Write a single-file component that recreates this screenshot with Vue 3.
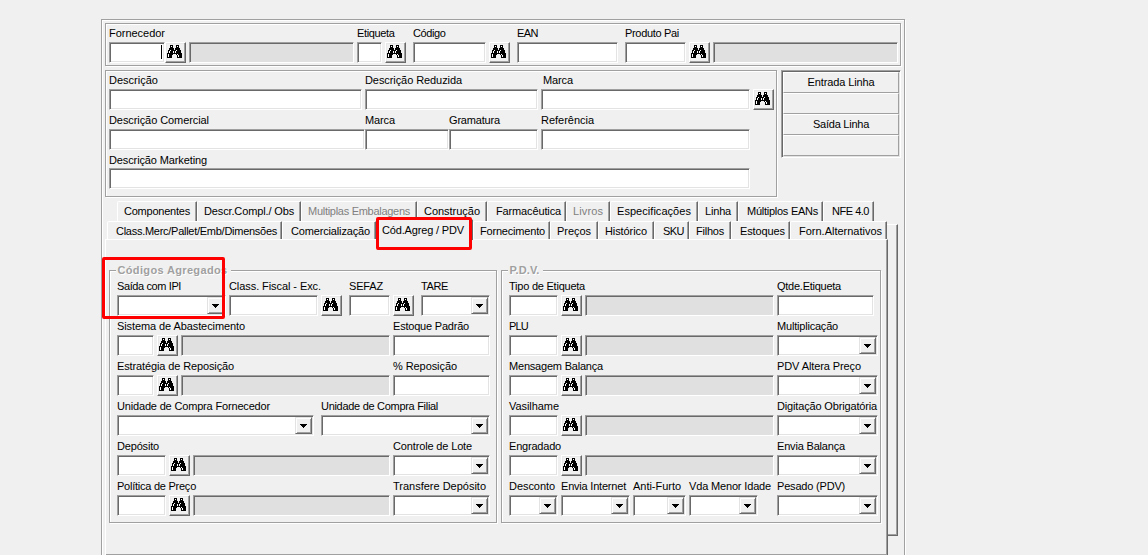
<script setup>
import { h } from 'vue'

// Spreads a caption over its nominal width
const vFit = (el, { value }) => {
  if (!value || el.dataset.fitted) return
  el.dataset.fitted = '1'
  requestAnimationFrame(() => {
    const natural = el.getBoundingClientRect().width
    el.style.letterSpacing = (value - 1 - natural) / el.textContent.length + 'px'
  })
}

// kind: t = text box, r = read-only box, c = combo box, b = search button
const f = (kind, w, label = '', lw = 0, gap = 3) => ({ kind, w, label, lw, gap })
const b = (gap = 3) => f('b', 21, '', 0, gap)

const header = [
  { ...f('t', 56, 'Fornecedor', 57, 0), caret: true }, b(0), f('r', 165),
  f('t', 25, 'Etiqueta', 38.5), b(), f('t', 73, 'Código', 33.5, 7), b(),
  f('t', 101, 'EAN', 22, 7), f('t', 61, 'Produto Pai', 55, 7), b(), f('r', 185),
]

const description = [
  [f('t', 253, 'Descrição', 50, 0), f('t', 173, 'Descrição Reduzida', 98), { ...f('t', 209, 'Marca', 31), indent: true }, b()],
  [f('t', 256, 'Descrição Comercial', 101, 0), f('t', 84, 'Marca', 31, 0), f('t', 89, 'Gramatura', 52, 0), f('t', 209, 'Referência', 54)],
  [f('t', 641, 'Descrição Marketing', 99, 0)],
]

const lines = [['Entrada Linha', 68], ['', 0], ['Saída Linha', 57], ['', 0]]

const tab = (text, w, tw, pad, disabled = false, active = false) => ({ text, w, tw, pad, disabled, active })
const upperTabs = [
  tab('Componentes', 80, 67, 6), tab('Descr.Compl./ Obs', 104, 91, 6),
  tab('Multiplas Embalagens', 116, 103, 6, true), tab('Construção', 70, 57, 6),
  tab('Farmacêutica', 79, 66, 8), tab('Livros', 44, 31, 6, true),
  tab('Especificações', 88, 75, 6), tab('Linha', 40, 27, 6),
  tab('Múltiplos EANs', 85, 72, 8), tab('NFE 4.0', 51, 38, 8),
]
const lowerTabs = [
  tab('Class.Merc/Pallet/Emb/Dimensões', 175, 162, 8), tab('Comercialização', 94, 80, 8),
  tab('Cód.Agreg / PDV', 97, 83, 5, false, true), tab('Fornecimento', 77, 66, 6),
  tab('Preços', 48, 35, 6), tab('Histórico', 56, 43, 6), tab('SKU', 35, 22, 8),
  tab('Filhos', 42, 29, 6), tab('Estoques', 59, 46, 8), tab('Forn.Alternativos', 97, 84, 8),
]
const tabRows = [upperTabs, lowerTabs]

const groups = [
  {
    name: 'Códigos Agregados', tw: 111, cls: 'codes',
    rows: [
      [f('c', 109, 'Saída com IPI', 65, 0), f('t', 89, 'Class. Fiscal - Exc.', 93), b(), f('t', 41, 'SEFAZ', 35, 7), b(), f('c', 69, 'TARE', 28, 7)],
      [f('t', 37, 'Sistema de Abastecimento', 129, 0), b(), f('r', 209), f('t', 97, 'Estoque Padrão', 77)],
      [f('t', 37, 'Estratégia de Reposição', 118, 0), b(), f('r', 209), f('t', 97, '% Reposição', 65)],
      [f('c', 197, 'Unidade de Compra Fornecedor', 154, 0), f('c', 169, 'Unidade de Compra Filial', 118, 7)],
      [f('t', 49, 'Depósito', 43, 0), b(), f('r', 197), f('c', 97, 'Controle de Lote', 80)],
      [f('t', 49, 'Política de Preço', 80, 0), b(), f('r', 197), f('c', 97, 'Transfere Depósito', 94)],
    ],
  },
  {
    name: 'P.D.V.', tw: 31, cls: 'pdv',
    rows: [
      [f('t', 49, 'Tipo de Etiqueta', 77, 0), b(), f('r', 189), f('t', 97, 'Qtde.Etiqueta', 65)],
      [f('t', 49, 'PLU', 20, 0), b(), f('r', 189), f('c', 101, 'Multiplicação', 62)],
      [f('t', 49, 'Mensagem Balança', 95, 0), b(), f('r', 189), f('c', 101, 'PDV Altera Preço', 85)],
      [f('t', 49, 'Vasilhame', 51, 0), b(), f('r', 189), f('c', 101, 'Digitação Obrigatória', 101)],
      [f('t', 49, 'Engradado', 53, 0), b(), f('r', 189), f('c', 101, 'Envia Balança', 69)],
      [f('c', 49, 'Desconto', 47, 0), f('c', 69, 'Envia Internet', 66), f('c', 53, 'Anti-Furto', 49), f('c', 69, 'Vda Menor Idade', 83), f('c', 101, 'Pesado (PDV)', 69, 19)],
    ],
  },
]

// Binoculars bitmap: X = black, o = white
const bitmap = [
  '...XXX...XXX...',
  '...XoX...XoX...',
  '...XXX...XXX...',
  '..XXXXX.XXXXX..',
  '..XXXXX.XXXXX..',
  '.XXoXXXXXoXXXX.',
  '.XoXXXoXoXXXXX.',
  '.XoXXXoXoXXXXX.',
  'XXXXXXXXXXXXXXX',
  'XoXXXX...XoXXXX',
  'XoXXX.....XoXXX',
  'XoXXX.....XoXXX',
  'XXXXX.....XXXXX',
]
const pixels = (ch) =>
  bitmap.map((row, y) => [...row].map((c, x) => (c === ch ? `M${x} ${y}h1v1h-1z` : '')).join('')).join('')
const black = pixels('X')
const white = pixels('o')
const Binoculars = () =>
  h('svg', { width: 15, height: 13, viewBox: '0 0 15 13', 'shape-rendering': 'crispEdges' }, [
    h('path', { d: black, fill: '#000' }),
    h('path', { d: white, fill: '#fff' }),
  ])

const Cell = ({ item }) =>
  h('div', { class: 'cell', style: { width: item.w + 'px', marginLeft: item.gap + 'px' } }, [
    h('div', { class: ['control', 'k-' + item.kind] }, [
      item.kind === 'b' ? h(Binoculars) : null,
      item.caret ? h('i', { class: 'caret' }) : null,
      item.kind === 'c'
        ? h('span', { class: 'drop' }, [
            h('svg', { width: 7, height: 4, viewBox: '0 0 7 4', 'shape-rendering': 'crispEdges' }, [
              h('path', { d: 'M0 0h7v1H0zM1 1h5v1H1zM2 2h3v1H2zM3 3h1v1H3z' }),
            ]),
          ])
        : null,
    ]),
  ])
Cell.props = ['item']
</script>

<template>
  <div class="screen">
    <div class="frame">
      <section class="etched header">
        <div class="row">
          <div v-for="(c, i) in header" :key="i" class="field">
            <span v-if="c.label" v-fit="c.lw" class="label" :style="{ marginLeft: c.gap + 'px' }">{{ c.label }}</span>
            <Cell :item="c" />
          </div>
        </div>
      </section>

      <div class="middle">
        <section class="etched description">
          <div v-for="(r, n) in description" :key="n" class="row">
            <div v-for="(c, i) in r" :key="i" class="field">
              <span v-if="c.label" v-fit="c.lw" class="label" :style="{ marginLeft: c.gap + (c.indent ? 2 : 0) + 'px' }">{{ c.label }}</span>
              <Cell :item="c" />
            </div>
          </div>
        </section>
        <aside class="lines">
          <div v-for="(l, i) in lines" :key="i" class="line"><span v-if="l[0]" v-fit="l[1]" class="caption">{{ l[0] }}</span></div>
        </aside>
      </div>

      <div class="tabs">
        <div class="back-page"></div>
        <div class="stack">
          <div v-for="(r, n) in tabRows" :key="n" class="tab-row" :class="{ lower: n === 1 }">
            <div
              v-for="t in r" :key="t.text" class="tab"
              :class="{ disabled: t.disabled, active: t.active }"
              :style="{ width: t.w + 'px', paddingLeft: t.pad + 'px' }"
            ><span v-fit="t.tw" class="caption">{{ t.text }}</span></div>
          </div>
          <div class="page">
            <section v-for="g in groups" :key="g.name" class="etched group" :class="g.cls">
              <h2 class="title"><span v-fit="g.tw" class="caption">{{ g.name }}</span></h2>
              <div v-for="(r, n) in g.rows" :key="n" class="row">
                <div v-for="(c, i) in r" :key="i" class="field">
                  <span v-if="c.label" v-fit="c.lw" class="label" :style="{ marginLeft: c.gap + 'px' }">{{ c.label }}</span>
                  <Cell :item="c" />
                </div>
              </div>
            </section>
          </div>
        </div>
      </div>
    </div>

    <div class="mark mark-tab"></div>
    <div class="mark mark-field"></div>
  </div>
</template>

<style>
html, body { background: #f0f0f0; overflow: hidden; }

.cell { flex: none; }
.control {
  box-sizing: border-box;
  display: flex;
  height: 21px;
  background: #fff;
  border: 1px solid;
  border-color: #a0a0a0 #fff #fff #a0a0a0;
  box-shadow: inset 1px 1px 0 #696969, inset -1px -1px 0 #e3e3e3;
}
.k-r {
  background: #e0e0e0;
  box-shadow: inset 1px 1px 0 #696969;
}
.k-b {
  align-items: flex-start;
  background: #f0f0f0;
  border-color: #fff #696969 #696969 #fff;
  box-shadow: inset -1px -1px 0 #a0a0a0, inset 1px 1px 0 #e8e8e8;
  padding: 2px 0 0 1px;
}
.k-c { justify-content: flex-end; padding: 1px; }
.drop {
  box-sizing: border-box;
  display: flex;
  justify-content: center;
  align-items: center;
  width: 17px;
  height: 17px;
  background: #f0f0f0;
  border: 1px solid;
  border-color: #e3e3e3 #696969 #696969 #e3e3e3;
  box-shadow: inset 1px 1px 0 #fff, inset -1px -1px 0 #a0a0a0;
}
.caret { width: 1px; height: 14px; margin: 2px 2px 0 auto; background: #000; }
</style>

<style scoped>
.screen {
  position: relative;
  box-sizing: border-box;
  width: 1148px;
  height: 555px;
  padding: 19px 0 0 101px;
  overflow: hidden;
  background: #f0f0f0;
  color: #000;
  font: 11px/13px "Liberation Sans", Arial, sans-serif;
}
.etched, .frame {
  box-sizing: border-box;
  border: 1px solid #a0a0a0;
  box-shadow: 1px 1px 0 #fff, inset 1px 1px 0 #fff;
}
.frame { width: 804px; height: 560px; padding: 3px; }
.header { width: 796px; height: 43px; padding: 3px; }
.middle { display: flex; gap: 4px; margin-top: 4px; }
.description {
  display: flex;
  flex-direction: column;
  gap: 4px;
  width: 672px;
  height: 127px;
  padding: 3px;
}
.row { display: flex; height: 36px; flex: none; }
.description .row:last-child { height: 35px; }
.field { display: flex; flex-direction: column; justify-content: space-between; flex: none; width: min-content; }
.field .label { width: max-content; margin-right: -200px; height: 13px; white-space: nowrap; }
.field:not(:has(.label)) { justify-content: flex-end; }

.lines {
  box-sizing: border-box;
  width: 121px;
  height: 88px;
  border: 1px solid;
  border-color: #a0a0a0 #fff #fff #a0a0a0;
  box-shadow: inset 1px 1px 0 #696969, inset -1px -1px 0 #e3e3e3;
  padding: 1px;
}
.line {
  box-sizing: border-box;
  height: 21px;
  padding-top: 3px;
  border: 1px solid;
  border-color: #fff #a0a0a0 #a0a0a0 #fff;
  text-align: center;
}

.tabs { display: grid; margin-top: 4px; width: 793px; }
.back-page, .stack { grid-area: 1 / 1; }
.back-page {
  box-sizing: border-box;
  width: 93px;
  height: 312px;
  margin: 23px 0 0 700px;
  border-top: 1px solid #fff;
  border-right: 1px solid #696969;
  border-bottom: 1px solid #696969;
  box-shadow: inset -1px -1px 0 #a0a0a0;
}
.stack { width: 783px; }
.tab-row { display: flex; height: 20px; padding-left: 12px; }
.tab-row.lower { height: 18px; padding-left: 2px; }
.tab {
  box-sizing: border-box;
  flex: none;
  height: 100%;
  padding-top: 3px;
  white-space: nowrap;
  background: #f0f0f0;
  border: solid;
  border-width: 1px 1px 0;
  border-color: #fff #696969 transparent #fff;
  border-radius: 2px 1px 0 0;
  box-shadow: inset -1px 0 0 #a0a0a0;
}
.tab.disabled { color: #808080; }
.tab.active { position: relative; top: -2px; height: 21px; padding-top: 4px; }
.caption { display: inline-block; }
.page {
  box-sizing: border-box;
  display: flex;
  align-items: flex-start;
  gap: 4px;
  width: 783px;
  height: 317px;
  padding: 30px 0 0 3px;
  background: #f0f0f0;
  border: solid;
  border-width: 1px;
  border-color: #fff #696969 #696969 #fff;
  box-shadow: inset -1px -1px 0 #a0a0a0;
}
.group {
  display: flex;
  flex-direction: column;
  gap: 4px;
  height: 253px;
  padding: 9px 7px 0;
}
.codes { width: 388px; }
.pdv { width: 380px; }
.title {
  height: 13px;
  width: max-content;
  margin: -16px 0 -1px -1px;
  padding: 0 3px 0 1.5px;
  background: #f0f0f0;
  color: #a0a0a0;
  font: bold 11px/13px "Liberation Sans", Arial, sans-serif;
  text-shadow: 1px 1px 0 #fff;
  white-space: nowrap;
}
.mark {
  position: absolute;
  box-sizing: border-box;
  border: 3px solid #f00;
  border-radius: 2px;
}
.mark-tab { left: 376px; top: 217px; width: 96px; height: 33px; }
.mark-field { left: 102px; top: 257px; width: 123px; height: 62px; }
</style>
